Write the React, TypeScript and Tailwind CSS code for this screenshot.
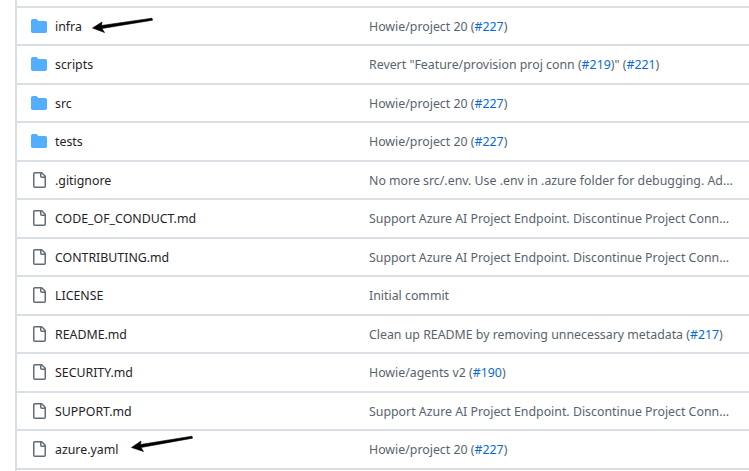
type Msg = (string | [string])[];
const rows: { name: string; dir?: boolean; msg: Msg }[] = [
  { name: "infra", dir: true, msg: ["Howie/project 20 (", ["#227"], ")"] },
  { name: "scripts", dir: true, msg: ['Revert "Feature/provision proj conn (', ["#219"], ')" (', ["#221"], ")"] },
  { name: "src", dir: true, msg: ["Howie/project 20 (", ["#227"], ")"] },
  { name: "tests", dir: true, msg: ["Howie/project 20 (", ["#227"], ")"] },
  { name: ".gitignore", msg: ["No more src/.env. Use .env in .azure folder for debugging. Ad..."] },
  { name: "CODE_OF_CONDUCT.md", msg: ["Support Azure AI Project Endpoint. Discontinue Project Conn..."] },
  { name: "CONTRIBUTING.md", msg: ["Support Azure AI Project Endpoint. Discontinue Project Conn..."] },
  { name: "LICENSE", msg: ["Initial commit"] },
  { name: "README.md", msg: ["Clean up README by removing unnecessary metadata (", ["#217"], ")"] },
  { name: "SECURITY.md", msg: ["Howie/agents v2 (", ["#190"], ")"] },
  { name: "SUPPORT.md", msg: ["Support Azure AI Project Endpoint. Discontinue Project Conn..."] },
  { name: "azure.yaml", msg: ["Howie/project 20 (", ["#227"], ")"] },
];

function FolderIcon() {
  return (
    <svg width="16" height="16" viewBox="0 0 16 16" className="shrink-0" fill="#54aeff">
      <path d="M1.75 1A1.75 1.75 0 0 0 0 2.75v10.5C0 14.216.784 15 1.75 15h12.5A1.75 1.75 0 0 0 16 13.25v-8.5A1.75 1.75 0 0 0 14.25 3H7.5a.25.25 0 0 1-.2-.1l-.9-1.2C6.07 1.26 5.55 1 5 1H1.75Z" />
    </svg>
  );
}

function FileIcon() {
  return (
    <svg width="16" height="16" viewBox="0 0 16 16" className="shrink-0" fill="#636c76">
      <path d="M2 1.75C2 .784 2.784 0 3.75 0h6.586c.464 0 .909.184 1.237.513l2.914 2.914c.329.328.513.773.513 1.237v9.586A1.75 1.75 0 0 1 13.25 16h-9.5A1.75 1.75 0 0 1 2 14.25Zm1.75-.25a.25.25 0 0 0-.25.25v12.5c0 .138.112.25.25.25h9.5a.25.25 0 0 0 .25-.25V6h-2.75A1.75 1.75 0 0 1 9 4.25V1.5Zm6.75.062V4.25c0 .138.112.25.25.25h2.688l-.011-.013-2.914-2.914-.013-.011Z" />
    </svg>
  );
}

function Arrow({ className, d }: { className: string; d: string }) {
  return (
    <svg width="64" height="20" viewBox="0 0 64 20" className={`absolute ${className}`}>
      <path d={d} fill="#000" stroke="#000" strokeWidth="0.6" strokeLinejoin="round" />
    </svg>
  );
}

export default function App() {
  return (
    <div className="relative h-[471px] w-[749px] overflow-hidden bg-white pl-[15px] text-[#1f2328]">
      <div className="h-full border-l-2 border-[#d9dfe5] pt-[5.5px] font-['Noto_Sans','Open_Sans',sans-serif] text-[12.35px]">
        <div className="border-b-2 border-[#d9dfe5]">
          {rows.map((r) => (
            <div key={r.name} className="flex h-[38.5px] items-center border-t-2 border-[#d9dfe5]">
              <div className="flex w-[352px] shrink-0 items-center gap-[8px] pl-[14px]">
                {r.dir ? <FolderIcon /> : <FileIcon />}
                <span className="pt-[3px]">{r.name}</span>
              </div>
              <div className="whitespace-nowrap pt-[3px] text-[#59636e]">
                {r.msg.map((m, i) =>
                  typeof m === "string" ? <span key={i}>{m}</span> : <span key={i} className="text-[#0969da]">{m[0]}</span>
                )}
              </div>
            </div>
          ))}
        </div>
      </div>
      <Arrow className="left-[92px] top-[17px]" d="M60 1.2 L60.5 3.2 L10 11.5 L12.5 15.5 L0.5 11 L10 5 L9.5 8.5 Z" />
      <Arrow className="left-[131px] top-[435px]" d="M61 1.2 L61.5 3.2 L10 12.5 L12.5 16.5 L0.5 12.5 L10 6 L9.5 9.5 Z" />
    </div>
  );
}
